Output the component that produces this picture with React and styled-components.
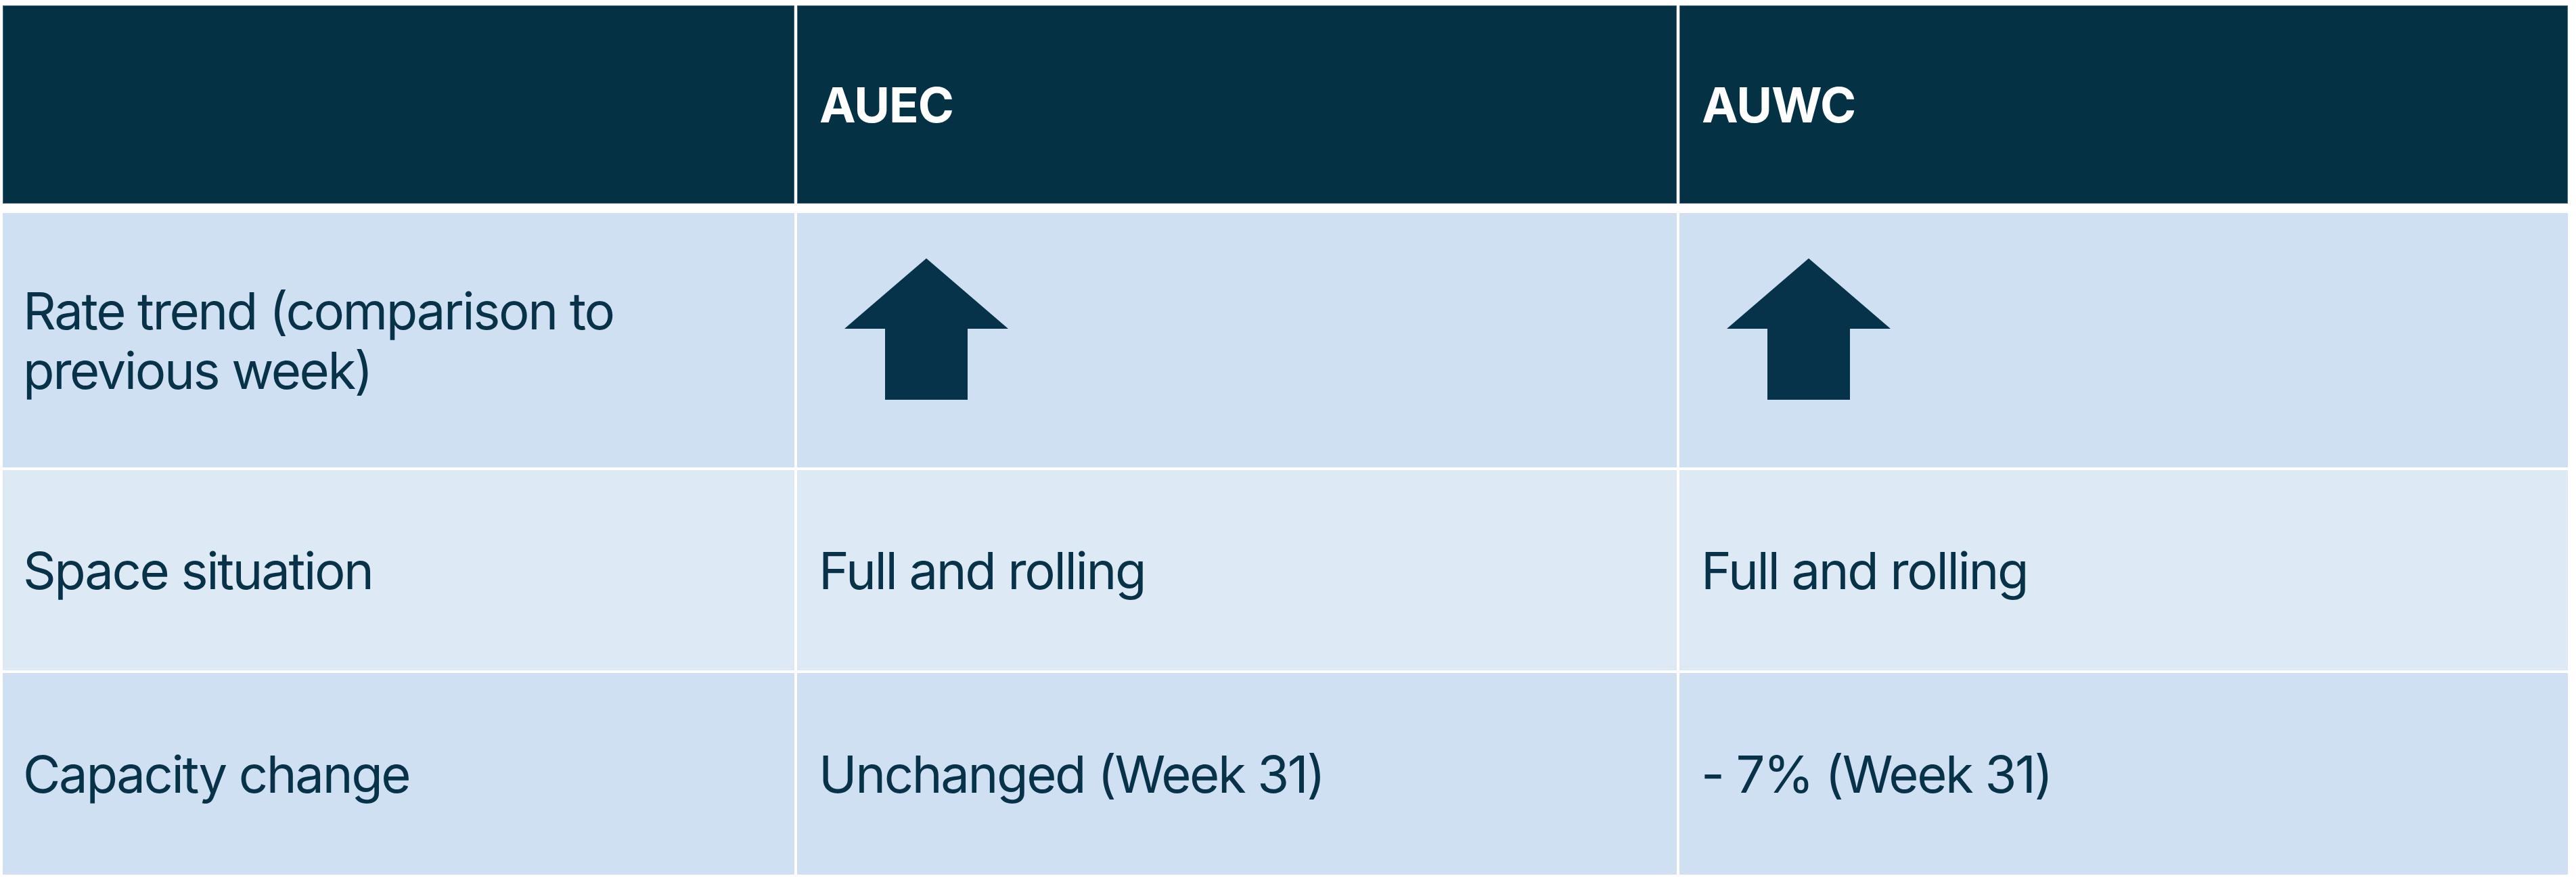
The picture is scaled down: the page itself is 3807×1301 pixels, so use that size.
import React from "react"
import styled, { createGlobalStyle } from "styled-components"

const GlobalStyle = createGlobalStyle`
    body {
        margin: 0;
        background-color: #ffffff;
        font-family: Inter, "Noto Sans", "Liberation Sans", sans-serif;
    }
`

const colours = {
    navy: "#06324a",
    header: "#053145",
    headerEdge: "#48677a",
    rowDark: "#cee0f1",
    rowLight: "#dde9f5",
    text: "#073247",
}

const Page = styled.div`
    padding: 8px 0 0 4px;
`

const Table = styled.div`
    display: flex;
    flex-direction: column;
    width: 3791px;
`

const Row = styled.div`
    display: grid;
    grid-template-columns: 1170px 1300px 1313px;
    column-gap: 4px;
    height: ${({ height }) => height}px;
    margin-top: ${({ gap }) => gap}px;
`

const HeaderCell = styled.div`
    display: flex;
    align-items: center;
    padding-left: 32px;
    background-color: ${colours.header};
    border: 1px solid ${colours.headerEdge};
    color: #ffffff;
    font-size: 72px;
    font-weight: 700;
    letter-spacing: -1px;
`

const Cell = styled.div`
    display: flex;
    align-items: center;
    padding: ${({ pad }) => pad || "0 0 0 32px"};
    background-color: ${({ shade }) => shade === "light" ? colours.rowLight : colours.rowDark};
    color: ${colours.text};
    font-size: 76px;
    font-weight: 400;
    line-height: 88px;
    letter-spacing: -2.4px;
`

const ArrowCell = styled(Cell)`
    align-items: flex-start;
    padding: 67px 0 0 70px;
`

function UpArrow() {
    return (
        <svg width="243" height="210" viewBox="0 0 243 210">
            <polygon
                points="121,0 242,104 182,104 182,209 60,209 60,104 0,104"
                fill={colours.navy}
            />
        </svg>
    )
}

const rows = [
    { label: "Space situation", values: ["Full and rolling", "Full and rolling"], shade: "light", height: 296, gap: 4 },
    { label: "Capacity change", values: ["Unchanged (Week 31)", "- 7% (Week 31)"], shade: "dark", height: 298, gap: 4 },
]

export default function App() {
    return (
        <Page>
            <GlobalStyle />
            <Table>
                <Row height={293} gap={0}>
                    <HeaderCell />
                    <HeaderCell>AUEC</HeaderCell>
                    <HeaderCell>AUWC</HeaderCell>
                </Row>
                <Row height={376} gap={14}>
                    <Cell shade="dark" pad="0 0 0 30px">
                        Rate trend (comparison to<br />previous week)
                    </Cell>
                    <ArrowCell shade="dark"><UpArrow /></ArrowCell>
                    <ArrowCell shade="dark"><UpArrow /></ArrowCell>
                </Row>
                {rows.map((row) => (
                    <Row key={row.label} height={row.height} gap={row.gap}>
                        <Cell shade={row.shade} pad="0 0 0 30px">{row.label}</Cell>
                        {row.values.map((value, i) => (
                            <Cell key={i} shade={row.shade}>{value}</Cell>
                        ))}
                    </Row>
                ))}
            </Table>
        </Page>
    )
}
